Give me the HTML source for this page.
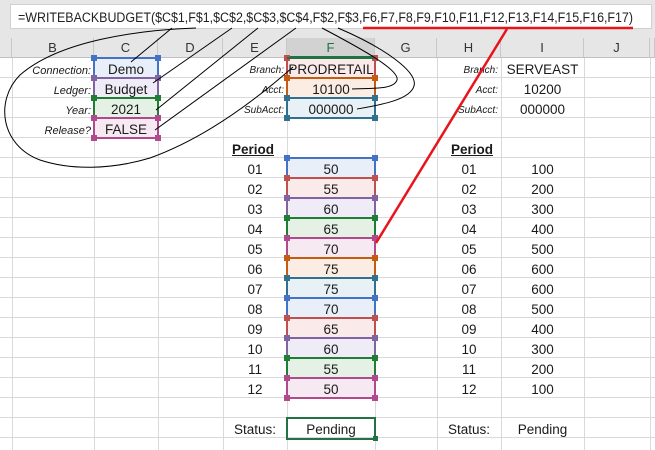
<!DOCTYPE html>
<html><head><meta charset="utf-8"><style>
*{margin:0;padding:0;box-sizing:border-box}
body{width:655px;height:450px;overflow:hidden;position:relative;background:#fff;font-family:"Liberation Sans",sans-serif;color:#1a1a1a}
.a{position:absolute}
.grid{left:0;top:58px;width:655px;height:392px;background-size:100% 20px;background-image:linear-gradient(to bottom,transparent 19px,#d9d9d9 19px)}
.v{top:58px;width:1px;height:392px;background:#d9d9d9}
.hd{top:38px;height:20px;background:#e6e6e6;border-right:1px solid #c8c8c8;border-bottom:1px solid #c0c0c0;text-align:center;font-size:13px;line-height:20px;color:#333}
.lb{font-style:italic;font-size:11px;text-align:right;line-height:20px;height:20px}
.t{font-size:13.5px;text-align:center;line-height:20px;height:20px}
.bx{border:2px solid;height:22px}
.c1,.c2,.c3,.c4{position:absolute;width:6px;height:6px}
.c1{left:-4px;top:-4px}.c2{right:-4px;top:-4px}.c3{left:-4px;bottom:-4px}.c4{right:-4px;bottom:-4px}
</style></head><body>
<div class="a" style="left:0;top:0;width:655px;height:38px;background:#e6e6e6"></div>
<div class="a" style="left:10px;top:4px;width:642px;height:25px;background:#fff;border:1px solid #d0d0d0"></div>
<div class="a grid"></div>
<div class="a v" style="left:12px"></div>
<div class="a v" style="left:94px"></div><div class="a v" style="left:158px"></div><div class="a v" style="left:223px"></div><div class="a v" style="left:287px"></div><div class="a v" style="left:375px"></div><div class="a v" style="left:437px"></div><div class="a v" style="left:501px"></div><div class="a v" style="left:584px"></div><div class="a v" style="left:650px"></div>
<div class="a hd" style="left:0;width:12px"></div>
<div class="a hd" style="left:12px;width:82px">B</div>
<div class="a hd" style="left:94px;width:64px">C</div>
<div class="a hd" style="left:158px;width:65px">D</div>
<div class="a hd" style="left:223px;width:64px">E</div>
<div class="a hd" style="left:287px;width:88px;background:#d2d2d2;border-bottom:2px solid #217346;color:#217346">F</div>
<div class="a hd" style="left:375px;width:62px">G</div>
<div class="a hd" style="left:437px;width:64px">H</div>
<div class="a hd" style="left:501px;width:83px">I</div>
<div class="a hd" style="left:584px;width:66px">J</div>
<div class="a hd" style="left:650px;width:5px"></div>

<div class="a lb" style="left:12px;top:61px;width:79px">Connection:</div>
<div class="a lb" style="left:12px;top:81px;width:79px">Ledger:</div>
<div class="a lb" style="left:12px;top:101px;width:79px">Year:</div>
<div class="a lb" style="left:12px;top:121px;width:79px">Release?</div>
<div class="a lb" style="left:223px;top:61px;width:61px;font-size:10px">Branch:</div>
<div class="a lb" style="left:223px;top:81px;width:61px;font-size:10px">Acct:</div>
<div class="a lb" style="left:223px;top:101px;width:61px;font-size:10px">SubAcct:</div>
<div class="a lb" style="left:437px;top:61px;width:61px;font-size:10px">Branch:</div>
<div class="a lb" style="left:437px;top:81px;width:61px;font-size:10px">Acct:</div>
<div class="a lb" style="left:437px;top:101px;width:61px;font-size:10px">SubAcct:</div>
<div class="a t" style="left:501px;top:60px;width:83px">SERVEAST</div>
<div class="a t" style="left:501px;top:80px;width:83px">10200</div>
<div class="a t" style="left:501px;top:100px;width:83px">000000</div>

<div class="a bx" style="left:93px;top:57px;width:66px;border-color:#4472c4;background:#e9eff8"><span class="c1" style="background:#4472c4"></span><span class="c2" style="background:#4472c4"></span></div>
<div class="a bx" style="left:93px;top:77px;width:66px;border-color:#8064a2;background:#efebf7"><span class="c1" style="background:#8064a2"></span><span class="c2" style="background:#8064a2"></span></div>
<div class="a bx" style="left:93px;top:97px;width:66px;border-color:#1e7e34;background:#e6f1e6"><span class="c1" style="background:#1e7e34"></span><span class="c2" style="background:#1e7e34"></span></div>
<div class="a bx" style="left:93px;top:117px;width:66px;border-color:#b04a8c;background:#f7e9f2"><span class="c1" style="background:#b04a8c"></span><span class="c2" style="background:#b04a8c"></span><span class="c3" style="background:#b04a8c"></span><span class="c4" style="background:#b04a8c"></span></div>
<div class="a t" style="left:94px;top:60px;width:64px">Demo</div>
<div class="a t" style="left:94px;top:80px;width:64px">Budget</div>
<div class="a t" style="left:94px;top:100px;width:64px">2021</div>
<div class="a t" style="left:94px;top:120px;width:64px">FALSE</div>

<div class="a bx" style="left:286px;top:57px;width:90px;border-color:#c0504d;background:#fbeaea"><span class="c1" style="background:#c0504d"></span><span class="c2" style="background:#c0504d"></span></div>
<div class="a bx" style="left:286px;top:77px;width:90px;border-color:#c55a11;background:#fbede4"><span class="c1" style="background:#c55a11"></span><span class="c2" style="background:#c55a11"></span></div>
<div class="a bx" style="left:286px;top:97px;width:90px;border-color:#31708f;background:#e8f1f5"><span class="c1" style="background:#31708f"></span><span class="c2" style="background:#31708f"></span><span class="c3" style="background:#31708f"></span><span class="c4" style="background:#31708f"></span></div>
<div class="a" style="left:287px;top:57px;width:88px;height:2px;background:#217346"></div>
<div class="a t" style="left:287px;top:60px;width:88px">PRODRETAIL</div>
<div class="a t" style="left:287px;top:80px;width:88px">10100</div>
<div class="a t" style="left:287px;top:100px;width:88px">000000</div>

<div class="a t" style="left:232px;top:140px;font-weight:bold;text-decoration:underline;text-align:left">Period</div>
<div class="a t" style="left:451px;top:140px;font-weight:bold;text-decoration:underline;text-align:left">Period</div>

<div class="a bx" style="left:286px;top:157px;width:90px;border-color:#4472c4;background:#e9eff8"><span class="c1" style="background:#4472c4"></span><span class="c2" style="background:#4472c4"></span></div>
<div class="a bx" style="left:286px;top:177px;width:90px;border-color:#c0504d;background:#fbeaea"><span class="c1" style="background:#c0504d"></span><span class="c2" style="background:#c0504d"></span></div>
<div class="a bx" style="left:286px;top:197px;width:90px;border-color:#8064a2;background:#efebf7"><span class="c1" style="background:#8064a2"></span><span class="c2" style="background:#8064a2"></span></div>
<div class="a bx" style="left:286px;top:217px;width:90px;border-color:#1e7e34;background:#e6f1e6"><span class="c1" style="background:#1e7e34"></span><span class="c2" style="background:#1e7e34"></span></div>
<div class="a bx" style="left:286px;top:237px;width:90px;border-color:#b04a8c;background:#f7e9f2"><span class="c1" style="background:#b04a8c"></span><span class="c2" style="background:#b04a8c"></span></div>
<div class="a bx" style="left:286px;top:257px;width:90px;border-color:#c55a11;background:#fbede4"><span class="c1" style="background:#c55a11"></span><span class="c2" style="background:#c55a11"></span></div>
<div class="a bx" style="left:286px;top:277px;width:90px;border-color:#31708f;background:#e8f1f5"><span class="c1" style="background:#31708f"></span><span class="c2" style="background:#31708f"></span></div>
<div class="a bx" style="left:286px;top:297px;width:90px;border-color:#4472c4;background:#e9eff8"><span class="c1" style="background:#4472c4"></span><span class="c2" style="background:#4472c4"></span></div>
<div class="a bx" style="left:286px;top:317px;width:90px;border-color:#c0504d;background:#fbeaea"><span class="c1" style="background:#c0504d"></span><span class="c2" style="background:#c0504d"></span></div>
<div class="a bx" style="left:286px;top:337px;width:90px;border-color:#8064a2;background:#efebf7"><span class="c1" style="background:#8064a2"></span><span class="c2" style="background:#8064a2"></span></div>
<div class="a bx" style="left:286px;top:357px;width:90px;border-color:#1e7e34;background:#e6f1e6"><span class="c1" style="background:#1e7e34"></span><span class="c2" style="background:#1e7e34"></span></div>
<div class="a bx" style="left:286px;top:377px;width:90px;border-color:#b04a8c;background:#f7e9f2"><span class="c1" style="background:#b04a8c"></span><span class="c2" style="background:#b04a8c"></span><span class="c3" style="background:#b04a8c"></span><span class="c4" style="background:#b04a8c"></span></div>

<div class="a" style="left:223px;top:160px;width:64px;font-size:13.5px;line-height:20px;text-align:center">01<br>02<br>03<br>04<br>05<br>06<br>07<br>08<br>09<br>10<br>11<br>12</div>
<div class="a" style="left:287px;top:160px;width:88px;font-size:13.5px;line-height:20px;text-align:center">50<br>55<br>60<br>65<br>70<br>75<br>75<br>70<br>65<br>60<br>55<br>50</div>
<div class="a" style="left:437px;top:160px;width:64px;font-size:13.5px;line-height:20px;text-align:center">01<br>02<br>03<br>04<br>05<br>06<br>07<br>08<br>09<br>10<br>11<br>12</div>
<div class="a" style="left:501px;top:160px;width:83px;font-size:13.5px;line-height:20px;text-align:center">100<br>200<br>300<br>400<br>500<br>600<br>600<br>500<br>400<br>300<br>200<br>100</div>

<div class="a t" style="left:223px;top:420px;width:64px">Status:</div>
<div class="a" style="left:286px;top:417px;width:90px;height:23px;border:2px solid #217346"></div>
<div class="a" style="left:373px;top:436px;width:5px;height:5px;background:#217346"></div>
<div class="a t" style="left:287px;top:420px;width:88px">Pending</div>
<div class="a t" style="left:437px;top:420px;width:64px">Status:</div>
<div class="a t" style="left:501px;top:420px;width:83px">Pending</div>

<svg class="a" style="left:0;top:0" width="655" height="450">
<text x="18" y="22" font-family="Liberation Sans" font-size="13.5" fill="#222" textLength="615" lengthAdjust="spacingAndGlyphs">=WRITEBACKBUDGET($C$1,F$1,$C$2,$C$3,$C$4,F$2,F$3,F6,F7,F8,F9,F10,F11,F12,F13,F14,F15,F16,F17)</text>
<g fill="none" stroke="#000" stroke-width="1">
<path d="M196 28 C140 30 60 40 20 75 C-5 100 0 145 40 160 C70 170 110 170 150 158 C200 140 250 105 293 67"/>
<path d="M172 28 L131 62"/>
<path d="M232 28 L153 83"/>
<path d="M258 28 L156 110"/>
<path d="M296 28 L155 130"/>
<path d="M322 28 C360 48 400 70 397 80 C394 90 370 88 352 89"/>
<path d="M338 28 C385 48 418 72 414 86 C410 100 380 105 357 109"/>
</g>
<g stroke="#e8141c" stroke-width="2.5" fill="none">
<path d="M363 28 L633 28"/>
<path d="M507 29 L376 243"/>
</g>
</svg>
</body></html>
